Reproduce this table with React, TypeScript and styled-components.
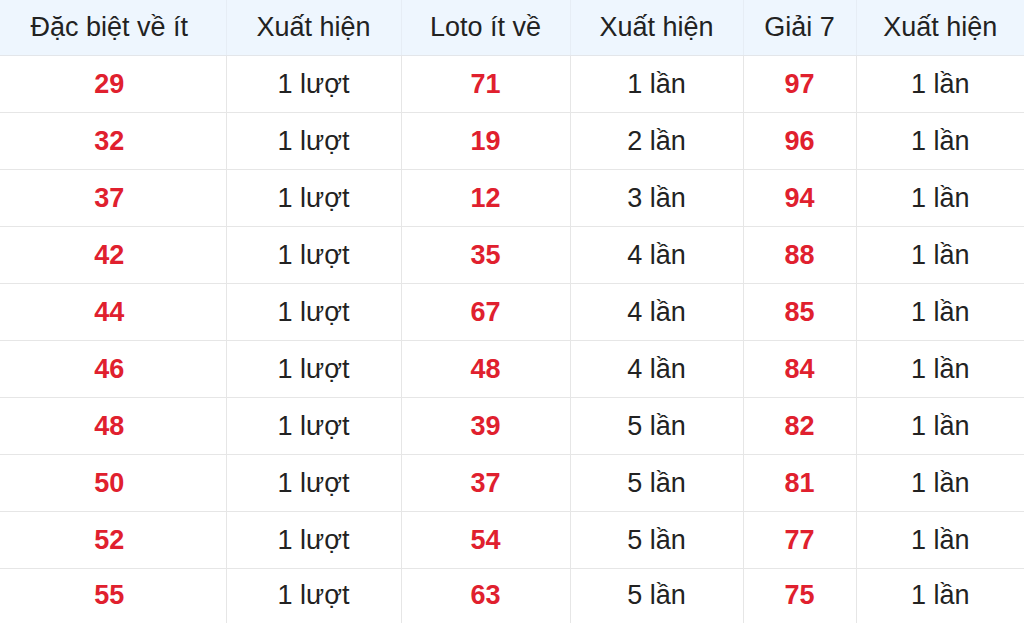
import React from "react";
import styled, { createGlobalStyle } from "styled-components";

const Global = createGlobalStyle`
  html, body { margin: 0; padding: 0; background: #ffffff; }
  body { font-family: "Liberation Sans", Arial, sans-serif; overflow: hidden; }
`;

const Table = styled.table`
  width: 1024px;
  table-layout: fixed;
  border-collapse: collapse;
  font-family: "Liberation Sans", Arial, sans-serif;
  font-size: 27px;
  color: #222222;
`;

const HeadCell = styled.th`
  height: 55px;
  padding: 0;
  background: #eef6fe;
  font-weight: normal;
  text-align: center;
  border-bottom: 1px solid #e3e6ea;
  border-left: 1px solid #e6edf5;
  &:first-child { border-left: none; padding-right: 7px; }
`;

const Row = styled.tr<{ $last?: boolean }>`
  height: ${(p) => (p.$last ? "54px" : "57px")};
  border-bottom: ${(p) => (p.$last ? "none" : "1px solid #e6e6e6")};
`;

const Cell = styled.td<{ $num?: boolean }>`
  padding: 0;
  text-align: center;
  border-left: 1px solid #e6e6e6;
  color: ${(p) => (p.$num ? "#e0202e" : "#222222")};
  font-weight: ${(p) => (p.$num ? "bold" : "normal")};
  &:first-child { border-left: none; padding-right: 7px; }
`;

const widths = [226, 175, 169, 173, 113, 168];
const headers = ["Đặc biệt về ít", "Xuất hiện", "Loto ít về", "Xuất hiện", "Giải 7", "Xuất hiện"];

const rows: [string, string, string, string, string, string][] = [
  ["29", "1 lượt", "71", "1 lần", "97", "1 lần"],
  ["32", "1 lượt", "19", "2 lần", "96", "1 lần"],
  ["37", "1 lượt", "12", "3 lần", "94", "1 lần"],
  ["42", "1 lượt", "35", "4 lần", "88", "1 lần"],
  ["44", "1 lượt", "67", "4 lần", "85", "1 lần"],
  ["46", "1 lượt", "48", "4 lần", "84", "1 lần"],
  ["48", "1 lượt", "39", "5 lần", "82", "1 lần"],
  ["50", "1 lượt", "37", "5 lần", "81", "1 lần"],
  ["52", "1 lượt", "54", "5 lần", "77", "1 lần"],
  ["55", "1 lượt", "63", "5 lần", "75", "1 lần"],
];

export default function App() {
  return (
    <>
      <Global />
      <Table>
        <colgroup>
          {widths.map((w, i) => (
            <col key={i} style={{ width: w }} />
          ))}
        </colgroup>
        <thead>
          <tr>
            {headers.map((h, i) => (
              <HeadCell key={i}>{h}</HeadCell>
            ))}
          </tr>
        </thead>
        <tbody>
          {rows.map((r, ri) => (
            <Row key={ri} $last={ri === rows.length - 1}>
              {r.map((c, ci) => (
                <Cell key={ci} $num={ci % 2 === 0}>
                  {c}
                </Cell>
              ))}
            </Row>
          ))}
        </tbody>
      </Table>
    </>
  );
}
